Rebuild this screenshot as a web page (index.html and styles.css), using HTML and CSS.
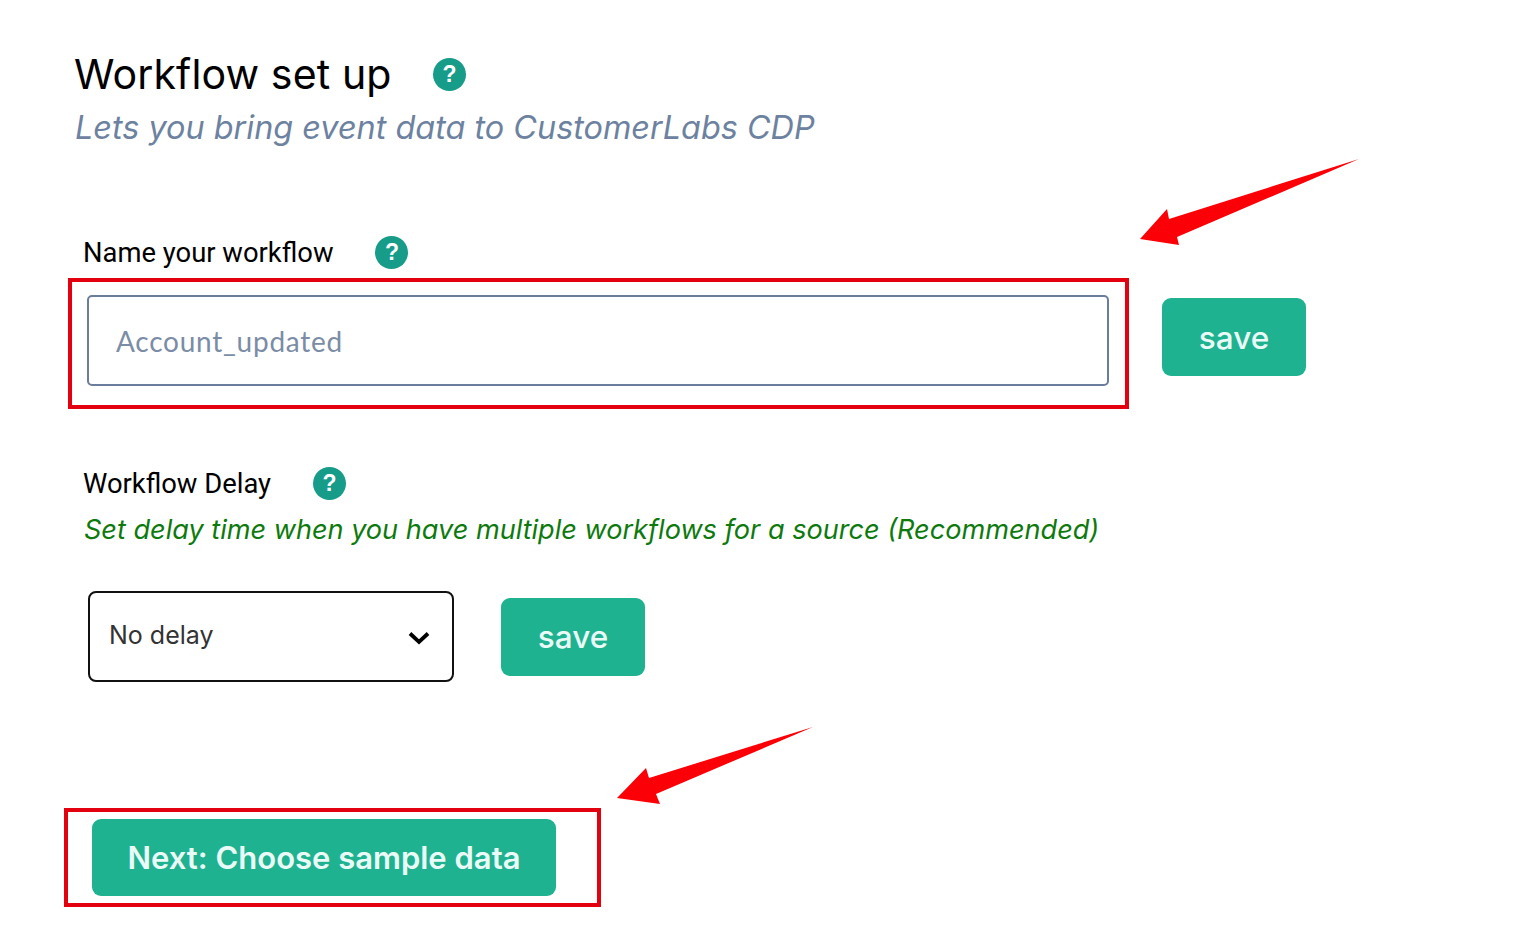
FILE: index.html
```html
<!DOCTYPE html>
<html lang="en">
<head>
<meta charset="utf-8">
<title>Workflow set up</title>
<link rel="stylesheet" href="styles.css">
</head>
<body>
<main class="page">
  <header class="head">
    <div class="title-row">
      <h1 class="title">Workflow set up</h1>
      <span class="help">?</span>
    </div>
    <p class="subtitle">Lets you bring event data to CustomerLabs CDP</p>
  </header>

  <section class="name-section">
    <div class="label-row name-label">
      <label class="label" for="wf">Name your workflow</label>
      <span class="help">?</span>
    </div>
    <div class="name-row">
      <input class="name-input" id="wf" placeholder="Account_updated">
      <button class="btn save">save</button>
    </div>
  </section>

  <section class="delay-section">
    <div class="label-row delay-label">
      <span class="label">Workflow Delay</span>
      <span class="help">?</span>
    </div>
    <p class="hint">Set delay time when you have multiple workflows for a source (Recommended)</p>
    <div class="delay-row">
      <div class="select">
        <span>No delay</span>
        <svg class="chev" viewBox="0 0 22 14" width="22" height="14"><path d="M2 2.500 11 11l9-8.500" fill="none" stroke="#000" stroke-width="3.800"/></svg>
      </div>
      <button class="btn save">save</button>
    </div>
  </section>

  <button class="btn next">Next: Choose sample data</button>
</main>

<div class="mark mark-name"></div>
<div class="mark mark-next"></div>
<svg class="arrows" viewBox="0 0 1536 933" width="1536" height="933">
  <polygon points="1359,159 1169,219 1167,209 1140,239 1179,245 1177,237" fill="#fb0007"/>
  <polygon points="813,727 649,778 646,768 617,798 660,804 656,794" fill="#fb0007"/>
</svg>
</body>
</html>
```
FILE: styles.css
```css
* { box-sizing: border-box; }
html, body { margin: 0; height: 100%; background: #fff; overflow: hidden; }
body { position: relative; color: #000; }
.page { padding: 48px 0 0 75px; }
.title-row { display: flex; align-items: center; gap: 42px; height: 52px; }
.title { margin: 0 0 0 -1px; font: 400 41.100px/52px "Inter", sans-serif; width: 317px; white-space: nowrap; letter-spacing: 0.1px; }
.subtitle { margin: 3px 0 0; font: italic 400 32.400px/50px "Inter", sans-serif; color: #6d82a0; white-space: nowrap; }
.help { width: 33px; height: 33px; border-radius: 50%; background: #169c88; color: #fff; font: 700 23px/33px "Liberation Sans", sans-serif; text-align: center; flex: none; }
.name-section { margin: 83px 0 0 8px; }
.label-row { display: flex; align-items: center; height: 34px; }
.label { font: 400 27.400px/34px "Roboto", sans-serif; white-space: nowrap; }
.name-label, .delay-label { gap: 42px; }
.name-label .help, .delay-label .help { margin-top: -2px; }
.name-row { display: flex; align-items: flex-start; margin: 25px 0 0 4px; }
.name-input { width: 1022px; height: 91px; padding: 0 27px; border: 2px solid #6b7d9c; border-radius: 5px; font: 400 28px "Lato", sans-serif; letter-spacing: 0.750px; background: #fff; outline: none; }
.name-input::placeholder { color: #7b8ca6; opacity: 1; }
.btn { border: 0; border-radius: 9px; background: #1fb291; color: #eafaf6; cursor: pointer; }
.save { width: 144px; height: 78px; font: 500 31.500px "Inter", sans-serif; }
.name-row .save { margin: 3px 0 0 53px; }
.delay-section { margin: 81px 0 0 8px; }
.hint { margin: 4px 0 0 1px; font: italic 400 27.100px/50px "Inter", sans-serif; color: #0e7a0e; white-space: nowrap; }
.delay-row { display: flex; align-items: flex-start; margin: 36px 0 0 5px; gap: 47px; }
.select { display: flex; align-items: center; justify-content: space-between; width: 366px; height: 91px; padding: 0 22px 4px 19px; border: 2px solid #111; border-radius: 8px; font: 400 25px "Inter", sans-serif; color: #333; }
.chev { margin-top: 6px; }
.delay-row .save { margin-top: 7px; padding-bottom: 2px; }
.next { display: block; width: 464px; height: 77px; margin: 137px 0 0 17px; font: 600 31px "Inter", sans-serif; }
.mark { position: absolute; border: 4px solid #e3000f; }
.mark-name { left: 68px; top: 278px; width: 1061px; height: 131px; }
.mark-next { left: 64px; top: 808px; width: 537px; height: 99px; }
.arrows { position: absolute; left: 0; top: 0; pointer-events: none; }
```
